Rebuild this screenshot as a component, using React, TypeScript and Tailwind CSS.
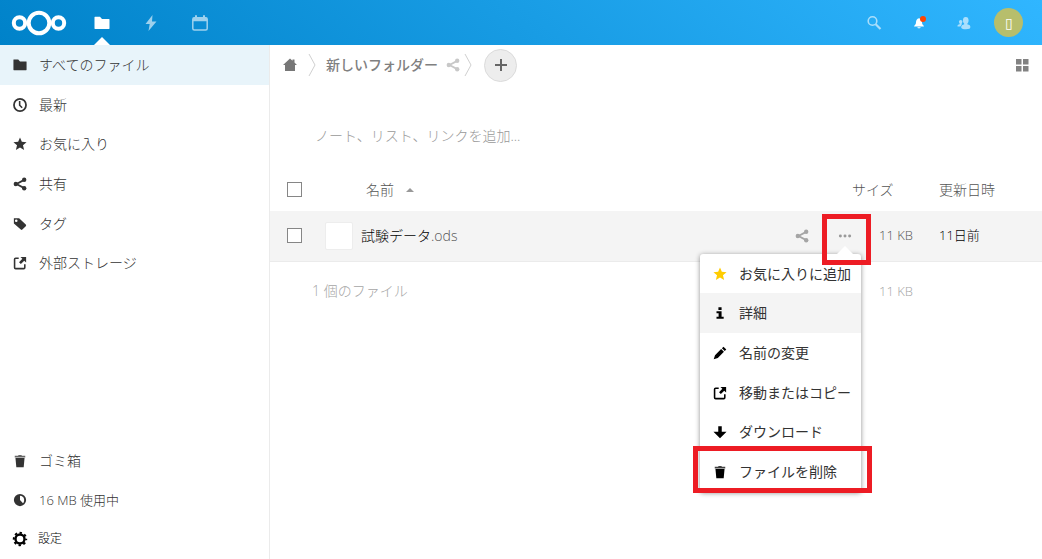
import { useState } from 'react';
import type { ReactNode } from 'react';

type IconName =
  | 'folder' | 'recent' | 'star' | 'share' | 'tag' | 'external' | 'trash' | 'quota' | 'gear'
  | 'flash' | 'calendar' | 'search' | 'bell' | 'contacts' | 'home' | 'info' | 'pencil' | 'download' | 'dots' | 'grid';

const shapes: Record<IconName, ReactNode> = {
  folder: <path d="M1 1.800c-.3 0-.5.2-.5.5v11.200c0 .3.2.5.5.5h14c.3 0 .5-.2.5-.5v-9c0-.3-.2-.5-.5-.5H8L6 1.800z" />,
  recent: (
    <g fill="none" stroke="currentColor" strokeWidth="2">
      <circle cx="8" cy="8" r="6.900" />
      <path d="M7.600 3.500v4.800l2.900 2.900" strokeWidth="1.800" />
    </g>
  ),
  star: <path d="M8 .5l2.100 5 5.400.4-4.100 3.600 1.300 5.300L8 12l-4.700 2.800 1.300-5.300L.5 5.900l5.400-.4z" />,
  share: (
    <g>
      <path d="M12.800 3.300L4 8l8.800 4.700" fill="none" stroke="currentColor" strokeWidth="2" />
      <circle cx="12.800" cy="3.200" r="2.500" />
      <circle cx="3.200" cy="8" r="2.500" />
      <circle cx="12.800" cy="12.800" r="2.500" />
    </g>
  ),
  tag: <path fillRule="evenodd" d="M1 1.500h6l7.600 7.200c.6.6.6 1.200 0 1.800l-3.900 3.900c-.6.6-1.200.6-1.800 0L1 7.500zm2.700 1.300a1.500 1.500 0 1 0 0 3 1.500 1.500 0 0 0 0-3z" />,
  external: (
    <g>
      <path d="M6.500 2.500H3Q1.800 2.500 1.800 3.700v9.500q0 1.200 1.200 1.200h9.300q1.200 0 1.200-1.200V9.500" fill="none" stroke="currentColor" strokeWidth="1.800" />
      <path d="M8.500 1H15v6.500l-2.200-2.200-3.800 3.800-2.100-2.100 3.800-3.800z" />
    </g>
  ),
  trash: (
    <g>
      <path d="M6.500 1h3l.8 1H14v2H2V2h3.700z" opacity=".75" />
      <path d="M2.800 4.500h10.400L12.200 15H3.800z" />
    </g>
  ),
  quota: <path fillRule="evenodd" d="M8 1a7 7 0 1 0 0 14A7 7 0 0 0 8 1zm0 2v5l3.400 3.700C13.800 9.300 13.200 3 8 3z" />,
  gear: (
    <g fill="none" stroke="currentColor">
      <circle cx="8" cy="8" r="4.500" strokeWidth="2.400" />
      <circle cx="8" cy="8" r="6.200" strokeWidth="2" strokeDasharray="2.400 2.470" strokeDashoffset="1.200" />
    </g>
  ),
  flash: <path d="M9.500 0L2.500 9h4.200L5.500 16l8-9.500H9z" />,
  calendar: (
    <g fill="none" stroke="currentColor">
      <rect x=".8" y="2.700" width="14.400" height="12.300" rx="1.500" strokeWidth="1.500" />
      <path d="M1 4.500h14" strokeWidth="3.500" />
      <path d="M4 .3v3.400M12 .3v3.400" strokeWidth="2" />
    </g>
  ),
  search: (
    <g fill="none" stroke="currentColor" strokeWidth="1.600">
      <circle cx="6.500" cy="6" r="4.300" />
      <path d="M9.700 9.200l4.800 4.800" strokeWidth="2.200" />
    </g>
  ),
  bell: <path d="M8 1.500C5.200 2 4 4.500 4 7c0 2.500-1.200 3.200-1.500 4.200h11c-.3-1-1.500-1.700-1.500-4.200 0-2.500-1.200-5-4-5.500zM1.500 11.200h13v1.500h-13zM5.800 13.500h4.400c-.3 2.200-4.100 2.200-4.400 0z" />,
  contacts: (
    <g>
      <ellipse cx="10" cy="5" rx="3.200" ry="3.900" />
      <path d="M8.300 7h3.400v2.500c2.500.5 4 1.500 3.500 3.500-.2 1.200-1.200 2-5 2S5 14.500 4.800 13c-.2-2 1.500-3 3.500-3.500z" />
      <circle cx="4.200" cy="6.700" r="2" />
      <path d="M3 7.500h2.400v2.300l-1.500 2.200H.6c-.3-1.500.7-2.300 2.400-2.500z" />
    </g>
  ),
  home: <path d="M8 1.500l-7 6.500h2v6h10V8h2l-2.500-2.400V2.500h-2v1.200z" />,
  info: <path d="M6.200 1.500h3.600v3H6.200zM4 6h5.800v6.200h2.400v2.300H4v-2.300h2.400V8.200H4z" />,
  pencil: <path d="M12 .8L15.200 4l-1.800 1.800-3.200-3.200zM9.300 3.500l3.200 3.200-7 7L.8 15.200l1.500-4.700z" />,
  download: <path d="M6 1.500h4v6.300h5.500L8 15.200.5 7.800H6z" />,
  dots: (
    <g>
      <circle cx="2.700" cy="8" r="1.700" />
      <circle cx="8" cy="8" r="1.700" />
      <circle cx="13.300" cy="8" r="1.700" />
    </g>
  ),
  grid: <path d="M2 2h5.500v5.500H2zM9 2h5.500v5.500H9zM2 9h5.500v5.500H2zM9 9h5.500v5.500H9z" />,
};

function Icon({ name, className = 'w-4 h-4' }: { name: IconName; className?: string }) {
  return (
    <svg viewBox="0 0 16 16" fill="currentColor" aria-hidden="true" className={`shrink-0 ${className}`}>
      {shapes[name]}
    </svg>
  );
}

function Chevron() {
  return (
    <svg viewBox="0 0 8 24" fill="none" stroke="#d0d0d0" aria-hidden="true" className="w-2 h-6 shrink-0">
      <path d="M1 1l6 11-6 11" />
    </svg>
  );
}

const navItems: { icon: IconName; label: string }[] = [
  { icon: 'folder', label: 'すべてのファイル' },
  { icon: 'recent', label: '最新' },
  { icon: 'star', label: 'お気に入り' },
  { icon: 'share', label: '共有' },
  { icon: 'tag', label: 'タグ' },
  { icon: 'external', label: '外部ストレージ' },
];

const menuItems: { icon: IconName; label: string }[] = [
  { icon: 'star', label: 'お気に入りに追加' },
  { icon: 'info', label: '詳細' },
  { icon: 'pencil', label: '名前の変更' },
  { icon: 'external', label: '移動またはコピー' },
  { icon: 'download', label: 'ダウンロード' },
  { icon: 'trash', label: 'ファイルを削除' },
];

const checkboxClass = 'block w-[15px] h-[15px] appearance-none border border-[#868686] bg-white checked:bg-[#0082c9]';

function Header() {
  return (
    <header className="h-[45px] flex items-center justify-between bg-[linear-gradient(40deg,#0082c9_0%,#30b6ff_100%)] text-white pr-[11px]">
      <div className="flex items-center h-full">
        <a href="#home" aria-label="Nextcloud" className="w-[77px] pl-[11px]">
          <svg viewBox="0 0 56 26" fill="none" stroke="#fff" strokeWidth="4" className="w-14 h-[26px]">
            <circle cx="28" cy="13" r="10.300" />
            <circle cx="8.500" cy="13" r="5.700" />
            <circle cx="47.500" cy="13" r="5.700" />
          </svg>
        </a>
        <nav className="flex h-full">
          <a href="#files" aria-label="ファイル" className="relative w-[49px] h-full flex items-center justify-center">
            <Icon name="folder" />
            <svg viewBox="0 0 16 8" fill="#fff" className="absolute bottom-0 w-4 h-2">
              <path d="M0 8l8-8 8 8z" />
            </svg>
          </a>
          <a href="#activity" aria-label="アクティビティ" className="w-[49px] h-full flex items-center justify-center opacity-60">
            <Icon name="flash" />
          </a>
          <a href="#calendar" aria-label="カレンダー" className="w-[49px] h-full flex items-center justify-center opacity-60">
            <Icon name="calendar" />
          </a>
        </nav>
      </div>
      <div className="flex items-center">
        <button type="button" aria-label="検索" className="w-[45px] flex justify-center opacity-60">
          <Icon name="search" />
        </button>
        <button type="button" aria-label="通知" className="w-[45px] flex justify-center">
          <span className="relative block">
            <Icon name="bell" className="w-3 h-3" />
            <span className="absolute -top-px -right-px w-1.5 h-1.5 rounded-full bg-[#ff4402]"></span>
          </span>
        </button>
        <button type="button" aria-label="連絡先" className="w-[45px] flex justify-center opacity-60">
          <Icon name="contacts" className="w-[14px] h-[14px]" />
        </button>
        <button type="button" aria-label="設定メニュー" className="w-[45px] flex justify-center">
          <span className="w-[29px] h-[29px] rounded-full bg-[#b7be6c] flex items-center justify-center text-sm">▯</span>
        </button>
      </div>
    </header>
  );
}

function Sidebar() {
  return (
    <aside className="w-[270px] shrink-0 border-r border-[#ebebeb] flex flex-col justify-between text-[#333]">
      <ul className="h-[238px] flex flex-col">
        {navItems.map((item, i) => (
          <li key={item.label} className={`flex-1 ${i === 0 ? 'bg-[#e8f4fa]' : ''}`}>
            <a href="#" className="h-full flex items-center gap-3 pl-[13px]">
              <Icon name={item.icon} className="w-3.5 h-3.5" />
              {item.label}
            </a>
          </li>
        ))}
      </ul>
      <ul className="h-[118px] flex flex-col">
        <li className="flex-1">
          <a href="#trash" className="h-full flex items-center gap-3 pl-[13px]">
            <Icon name="trash" className="w-3.5 h-3.5" />
            ゴミ箱
          </a>
        </li>
        <li className="flex-1 flex items-center gap-3 pl-[13px]">
          <Icon name="quota" className="w-3.5 h-3.5" />
          <span className="text-[13px]">16 MB 使用中</span>
        </li>
        <li className="flex-1">
          <button type="button" className="w-full h-full flex items-center gap-2.5 pl-3 text-xs text-black">
            <Icon name="gear" />
            設定
          </button>
        </li>
      </ul>
    </aside>
  );
}

function ActionMenu() {
  return (
    <div className="absolute z-10 top-[42px] -right-[9px] w-[161px] bg-white rounded-[3px] shadow-[0_1px_5px_rgba(0,0,0,0.45)]">
      <svg viewBox="0 0 16 8" fill="#fff" className="absolute -top-2 right-2 w-4 h-2">
        <path d="M0 8l8-8 8 8z" />
      </svg>
      <ul className="h-[238px] flex flex-col font-normal text-[#333]">
        {menuItems.map((item, i) => (
          <li key={item.label} className={`flex-1 relative ${i === 1 ? 'bg-[#f4f4f4]' : ''}`}>
            <button type="button" className="w-full h-full flex items-center gap-3 pl-[13px] whitespace-nowrap">
              <Icon name={item.icon} className={i === 0 ? 'w-3.5 h-3.5 text-[#fc0]' : 'w-3.5 h-3.5 text-black'} />
              {item.label}
            </button>
            {i === 5 && (
              <span className="absolute -top-[6px] -bottom-px -left-[7px] -right-[11px] border-5 border-[#ed1c24] pointer-events-none"></span>
            )}
          </li>
        ))}
      </ul>
    </div>
  );
}

function FileTable({ menuOpen, onToggle }: { menuOpen: boolean; onToggle: () => void }) {
  return (
    <table className="w-full table-fixed text-left">
      <thead>
        <tr className="h-[43px] text-[#555]">
          <th className="w-12 pl-[17px]">
            <input type="checkbox" aria-label="すべて選択" className={checkboxClass} />
          </th>
          <th className="pl-12 font-light">
            <button type="button" className="flex items-center gap-3">
              名前
              <svg viewBox="0 0 8 4" fill="#999" className="w-2 h-1">
                <path d="M0 4l4-4 4 4z" />
              </svg>
            </button>
          </th>
          <th className="w-[76px] font-light">サイズ</th>
          <th className="w-[114px] pl-[11px] font-light">更新日時</th>
        </tr>
      </thead>
      <tbody>
        <tr className="h-[50px] bg-[#f4f4f4] border-b border-[#ebebeb]">
          <td className="pl-[17px]">
            <input type="checkbox" aria-label="試験データ.odsを選択" className={checkboxClass} />
          </td>
          <td>
            <div className="flex items-center pl-[7px]">
              <span className="w-7 h-7 bg-white border border-[#ededed] rounded-[2px]"></span>
              <a href="#file" className="pl-2 text-black">
                試験データ<span className="text-[#555]">.ods</span>
              </a>
              <button type="button" aria-label="共有" className="ml-auto mr-[29px] text-[#a5a5a5]">
                <Icon name="share" className="w-3.5 h-3.5" />
              </button>
              <div className="relative w-3.5 h-12 flex items-center justify-center">
                <button type="button" aria-label="操作" aria-expanded={menuOpen} onClick={onToggle} className="text-[#999]">
                  <Icon name="dots" className="w-3.5 h-3.5" />
                </button>
                {menuOpen && <ActionMenu />}
                <span className="absolute z-20 top-0.5 -left-4 w-[49px] h-[51px] border-5 border-[#ed1c24] pointer-events-none"></span>
              </div>
            </div>
          </td>
          <td className="pr-[15px] text-right text-[13px] text-[#555]">11 KB</td>
          <td className="pl-[11px] text-[13px] text-black">11日前</td>
        </tr>
      </tbody>
      <tfoot>
        <tr className="h-[60px] text-[#a5a5a5]">
          <td></td>
          <td>
            <span className="-ml-1.5">1 個のファイル</span>
          </td>
          <td className="pr-[15px] text-right text-[13px]">11 KB</td>
          <td></td>
        </tr>
      </tfoot>
    </table>
  );
}

export default function App() {
  const [menuOpen, setMenuOpen] = useState(true);

  return (
    <div className="min-h-screen flex flex-col bg-white text-sm font-light font-['Open_Sans','Noto_Sans_CJK_JP',sans-serif]">
      <Header />
      <div className="flex-1 flex">
        <Sidebar />
        <main className="flex-1 min-w-0">
          <div className="h-10 flex items-center pl-3 pr-3">
            <a href="#home" aria-label="ホーム" className="text-[#777]">
              <Icon name="home" />
            </a>
            <div className="flex items-center pl-2.5">
              <Chevron />
              <a href="#folder" className="pl-2.5 font-medium text-[#808080]">新しいフォルダー</a>
              <button type="button" aria-label="共有" className="pl-2 pr-1 text-[#c8c8c8]">
                <Icon name="share" className="w-3.5 h-3.5" />
              </button>
              <Chevron />
            </div>
            <button
              type="button"
              aria-label="新規"
              className="ml-3 w-[33px] h-[33px] rounded-full border border-[#dbdbdb] bg-[#ededed] flex items-center justify-center"
            >
              <svg viewBox="0 0 12 12" stroke="#666" strokeWidth="2" className="w-3 h-3">
                <path d="M6 0v12M0 6h12" />
              </svg>
            </button>
            <button type="button" aria-label="グリッド表示" className="ml-auto text-[#828282]">
              <Icon name="grid" />
            </button>
          </div>
          <div className="h-[83px] pt-9 pl-[45px]">
            <input
              type="text"
              aria-label="ノート"
              placeholder="ノート、リスト、リンクを追加..."
              className="w-full h-7 outline-none placeholder:text-[#999]"
            />
          </div>
          <FileTable menuOpen={menuOpen} onToggle={() => setMenuOpen(!menuOpen)} />
        </main>
      </div>
    </div>
  );
}
